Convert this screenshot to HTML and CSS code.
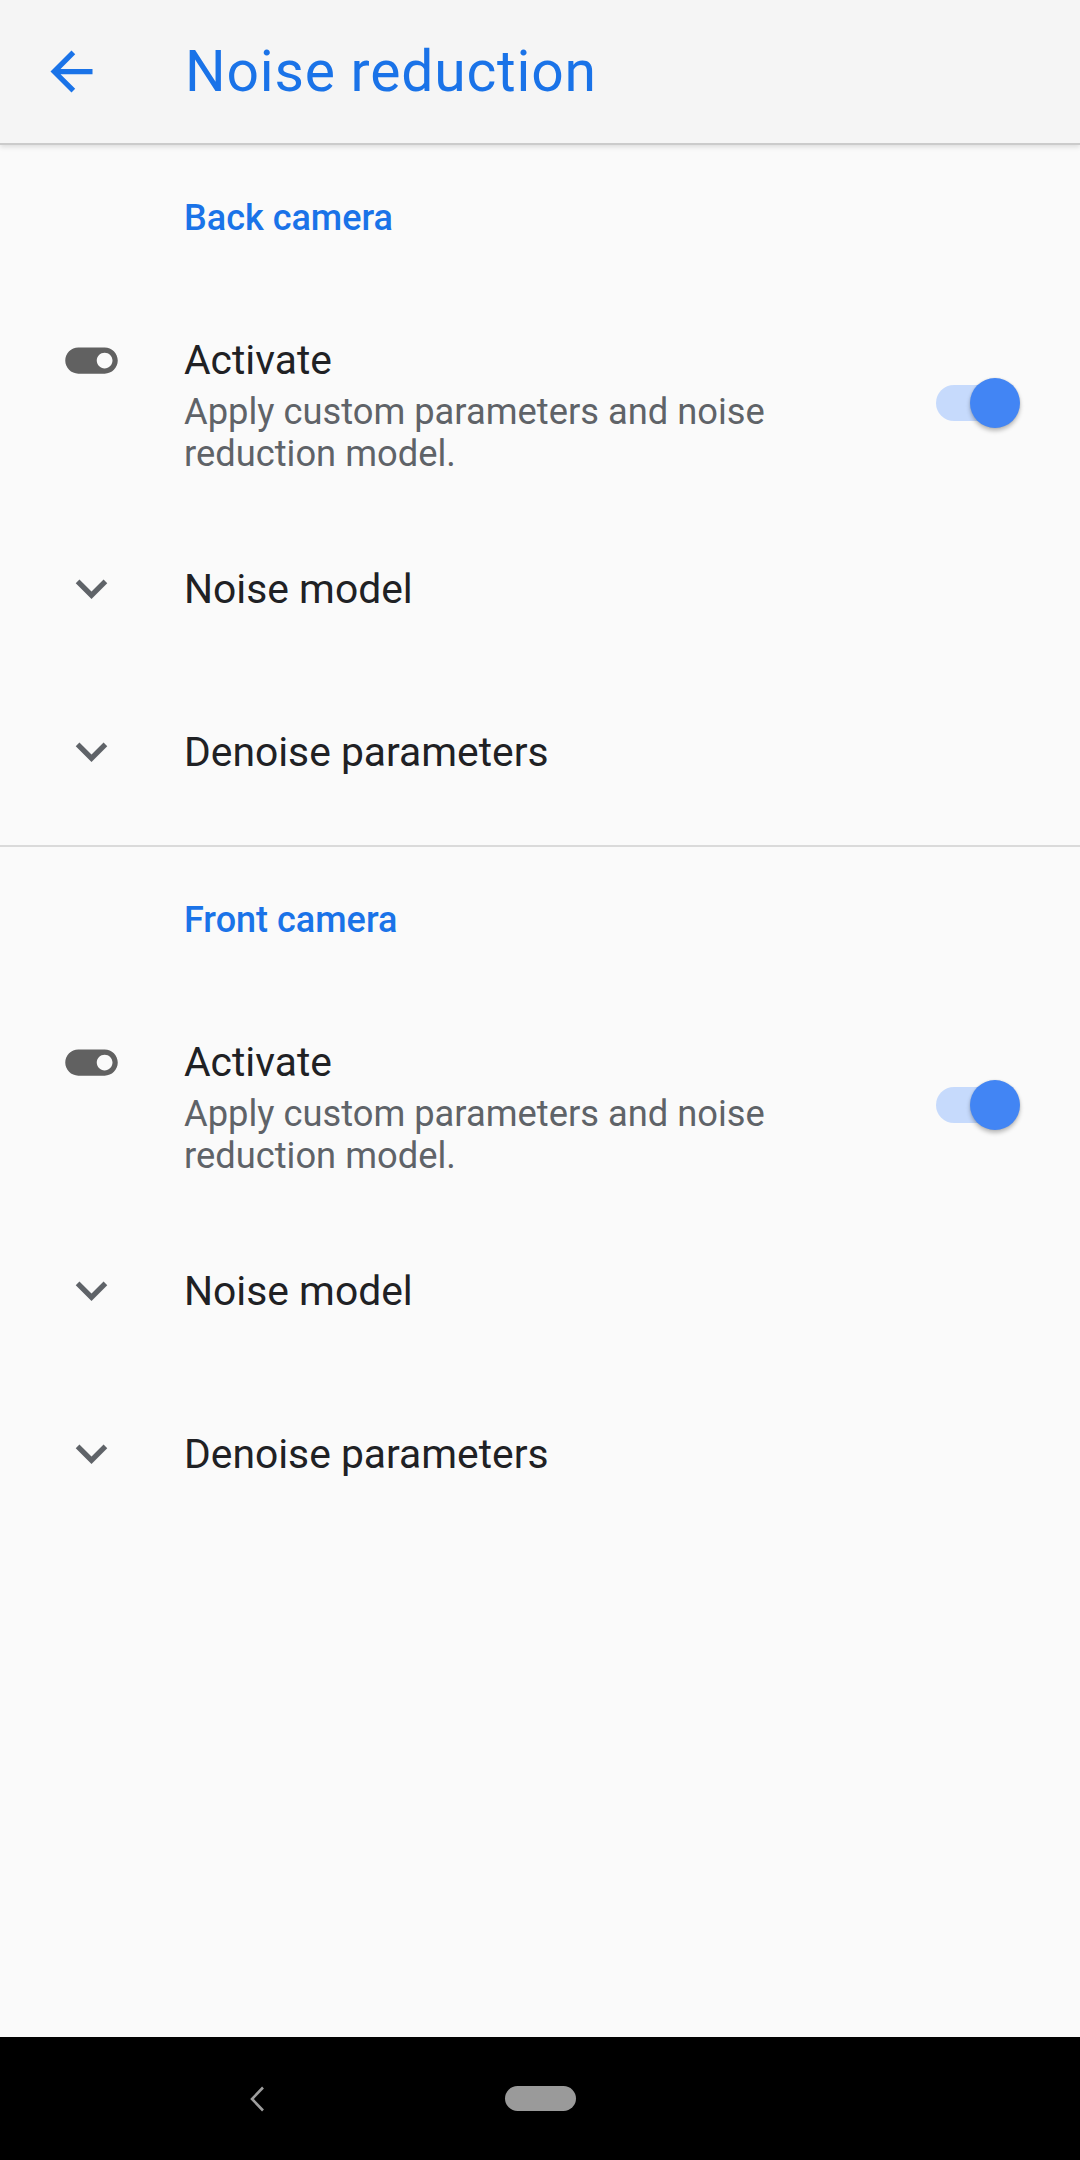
FILE: index.html
```html
<!DOCTYPE html>
<html lang="en">
<head>
<meta charset="utf-8">
<title>Noise reduction</title>
<link rel="stylesheet" href="styles.css">
</head>
<body>
<div class="screen">
  <header class="toolbar">
    <div class="nav-icon">
      <svg viewBox="0 0 24 24" width="63" height="63"><path fill="#1a73e8" d="M20 11H7.83l5.59-5.59L12 4l-8 8 8 8 1.41-1.41L7.83 13H20v-2z"/></svg>
    </div>
    <h1 class="toolbar-title">Noise reduction</h1>
  </header>

  <main class="content">
    <section class="group">
      <div class="category">Back camera</div>
      <div class="pref pref-switch">
        <div class="pref-icon">
          <svg viewBox="0 0 24 24" width="63" height="63"><path fill="#616161" d="M17 7H7c-2.76 0-5 2.24-5 5s2.24 5 5 5h10c2.76 0 5-2.24 5-5s-2.24-5-5-5zm0 8c-1.66 0-3-1.34-3-3s1.34-3 3-3 3 1.34 3 3-1.34 3-3 3z"/></svg>
        </div>
        <div class="pref-text">
          <div class="pref-title">Activate</div>
          <div class="pref-summary">Apply custom parameters and noise reduction model.</div>
        </div>
        <div class="switch"><span class="track"></span><span class="thumb"></span></div>
      </div>
      <div class="pref pref-expand">
        <div class="pref-icon">
          <svg viewBox="0 0 24 24" width="63" height="63"><path fill="#5f6368" d="M16.59 8.59L12 13.17 7.41 8.59 6 10l6 6 6-6z"/></svg>
        </div>
        <div class="pref-title">Noise model</div>
      </div>
      <div class="pref pref-expand">
        <div class="pref-icon">
          <svg viewBox="0 0 24 24" width="63" height="63"><path fill="#5f6368" d="M16.59 8.59L12 13.17 7.41 8.59 6 10l6 6 6-6z"/></svg>
        </div>
        <div class="pref-title">Denoise parameters</div>
      </div>
    </section>
    <div class="divider"></div>
    <section class="group">
      <div class="category">Front camera</div>
      <div class="pref pref-switch">
        <div class="pref-icon">
          <svg viewBox="0 0 24 24" width="63" height="63"><path fill="#616161" d="M17 7H7c-2.76 0-5 2.24-5 5s2.24 5 5 5h10c2.76 0 5-2.24 5-5s-2.24-5-5-5zm0 8c-1.66 0-3-1.34-3-3s1.34-3 3-3 3 1.34 3 3-1.34 3-3 3z"/></svg>
        </div>
        <div class="pref-text">
          <div class="pref-title">Activate</div>
          <div class="pref-summary">Apply custom parameters and noise reduction model.</div>
        </div>
        <div class="switch"><span class="track"></span><span class="thumb"></span></div>
      </div>
      <div class="pref pref-expand">
        <div class="pref-icon">
          <svg viewBox="0 0 24 24" width="63" height="63"><path fill="#5f6368" d="M16.59 8.59L12 13.17 7.41 8.59 6 10l6 6 6-6z"/></svg>
        </div>
        <div class="pref-title">Noise model</div>
      </div>
      <div class="pref pref-expand">
        <div class="pref-icon">
          <svg viewBox="0 0 24 24" width="63" height="63"><path fill="#5f6368" d="M16.59 8.59L12 13.17 7.41 8.59 6 10l6 6 6-6z"/></svg>
        </div>
        <div class="pref-title">Denoise parameters</div>
      </div>
    </section>
  </main>

  <nav class="navbar">
    <svg class="nav-back" viewBox="0 0 16 26" width="16" height="26"><path d="M14 1.5L3 13l11 11.5" fill="none" stroke="#9e9e9e" stroke-width="2.6"/></svg>
    <span class="nav-home"></span>
  </nav>
</div>
</body>
</html>
```

FILE: styles.css
```css
* { box-sizing: border-box; }

html, body {
  margin: 0;
  padding: 0;
}

body {
  background: #fafafa;
  font-family: Roboto, "Noto Sans", "Liberation Sans", sans-serif;
  color: #202124;
}

.screen {
  width: 1080px;
  height: 2160px;
  display: flex;
  flex-direction: column;
  overflow: hidden;
}

.toolbar {
  height: 145px;
  flex: 0 0 145px;
  background: #f5f5f5;
  border-bottom: 2px solid #cbcbcb;
  box-shadow: 0 2px 5px rgba(0, 0, 0, 0.12);
  display: flex;
  align-items: center;
  padding-left: 40px;
  position: relative;
  z-index: 1;
}

.nav-icon {
  width: 63px;
  height: 63px;
  display: flex;
}

.toolbar-title {
  margin: 0 0 0 82px;
  font-weight: 400;
  font-size: 57px;
  letter-spacing: 0.8px;
  color: #1a73e8;
  line-height: 1;
}

.content {
  flex: 1;
  display: flex;
  flex-direction: column;
}

.group {
  display: flex;
  flex-direction: column;
  padding-bottom: 12px;
}

.category {
  height: 146px;
  display: flex;
  align-items: center;
  padding-left: 184px;
  font-size: 36px;
  font-weight: 500;
  color: #1a73e8;
}

.pref {
  display: flex;
  padding-left: 60px;
  padding-right: 60px;
}

.pref-icon {
  width: 63px;
  height: 63px;
  flex: 0 0 63px;
  display: flex;
  margin-right: 61px;
}

.pref-title {
  font-size: 40.8px;
  line-height: 50px;
  color: #202124;
}

.pref-switch {
  height: 216px;
  align-items: flex-start;
  padding-top: 44px;
}

.pref-switch .pref-icon {
  margin-top: -6.5px;
}

.pref-text {
  flex: 1;
  min-width: 0;
  margin-right: 50px;
}

.pref-summary {
  margin-top: 6px;
  font-size: 36.3px;
  line-height: 42px;
  color: #5f6368;
}

.switch {
  position: relative;
  width: 84px;
  height: 50px;
  flex: 0 0 84px;
  margin-top: 43px;
}

.switch .track {
  position: absolute;
  left: 0;
  top: 7px;
  width: 80px;
  height: 36px;
  border-radius: 18px;
  background: #c6dafc;
}

.switch .thumb {
  position: absolute;
  right: 0;
  top: 0;
  width: 50px;
  height: 50px;
  border-radius: 50%;
  background: #4285f4;
  box-shadow: 0 3px 4px rgba(0, 0, 0, 0.25), 0 0 2px rgba(0, 0, 0, 0.12);
}

.pref-expand {
  height: 163px;
  align-items: center;
}

.divider {
  height: 2px;
  background: #dadada;
}

.navbar {
  height: 123px;
  flex: 0 0 123px;
  background: #000;
  display: flex;
  align-items: center;
  padding-left: 249px;
}

.nav-back {
  display: block;
}

.nav-home {
  margin-left: 240px;
  width: 71px;
  height: 25px;
  border-radius: 12.5px;
  background: #9a9a9a;
}
```
